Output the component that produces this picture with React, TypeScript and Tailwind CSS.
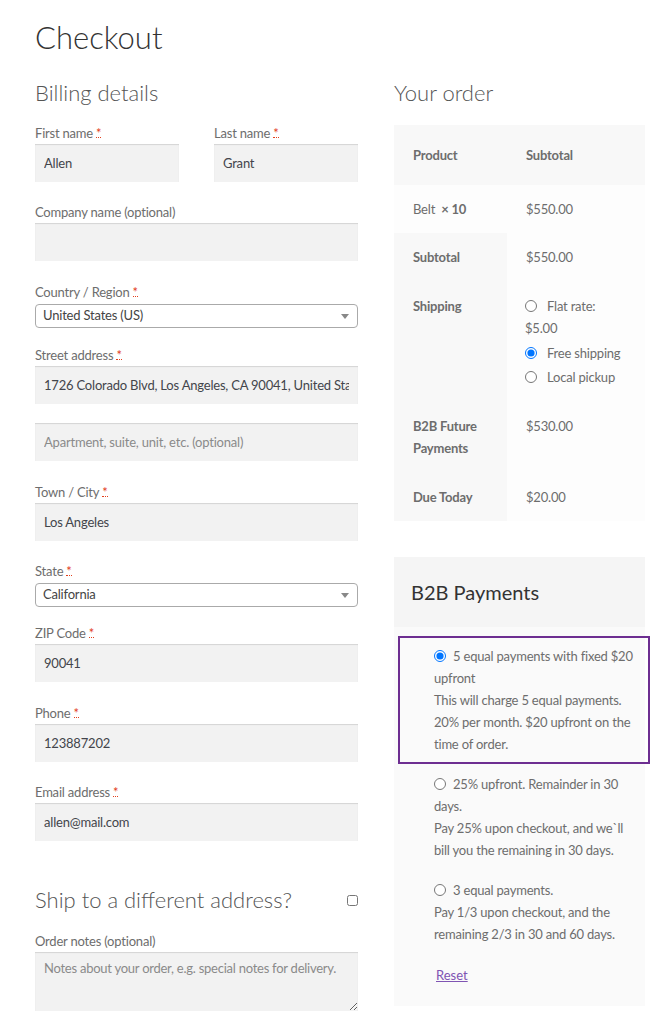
import React from 'react';

const font = { fontFamily: 'Lato, "Open Sans", Arial, sans-serif' };

const Req = () => (
  <abbr
    title="required"
    className="ml-[3px] text-[#e2401c] no-underline border-b border-dotted border-[#e2401c] leading-[8px] inline-block"
  >
    *
  </abbr>
);

const Label: React.FC<{ text: string; req?: boolean }> = ({ text, req }) => (
  <label className="block text-[13px] leading-[22px] tracking-[-0.2px] text-[#6d6d6d]">
    {text}
    {req && <Req />}
  </label>
);

const TextInput: React.FC<{ value?: string; placeholder?: string }> = ({ value, placeholder }) => (
  <input
    readOnly
    value={value ?? ''}
    placeholder={placeholder}
    className="block w-full h-[38px] bg-[#f2f2f2] px-[9px] text-[13px] tracking-[-0.2px] text-[#43454b] placeholder:text-[#8a8a8a] shadow-[inset_0_1px_1px_rgba(0,0,0,0.125)] outline-none"
  />
);

const Select: React.FC<{ value: string }> = ({ value }) => (
  <div className="mt-[1px] h-[24px] w-full border border-[#aaa] rounded-[4px] bg-white flex items-center justify-between pl-[7px] pr-[8px]">
    <span className="text-[13px] tracking-[-0.2px] text-[#444]">{value}</span>
    <span className="w-0 h-0 border-l-[4px] border-r-[4px] border-t-[5px] border-l-transparent border-r-transparent border-t-[#888]" />
  </div>
);

const Radio: React.FC<{ checked?: boolean; name: string; className?: string }> = ({ checked, name, className }) => (
  <input
    type="radio"
    name={name}
    defaultChecked={checked}
    className={`m-0 w-[12px] h-[12px] align-[-1px] ${className ?? ''}`}
  />
);

const PayOption: React.FC<{
  selected?: boolean;
  title: string;
  desc: string;
}> = ({ selected, title, desc }) => (
  <div
    className={`ml-[4px] w-[252px] border-2 py-[7px] pl-[34px] pr-[8px] text-[13px] leading-[22px] tracking-[-0.2px] text-[#6d6d6d] ${
      selected ? 'border-[#6d2e91]' : 'border-transparent'
    }`}
  >
    <div>
      <Radio name="b2b" checked={selected} className="mr-[7px]" />
      {title}
    </div>
    <div>{desc}</div>
  </div>
);

export default function App() {
  return (
    <div className="min-h-screen bg-white pl-[35px] pt-[17px] text-[#6d6d6d]" style={font}>
      <h1 className="text-[31px] leading-[40px] font-light text-[#333]">Checkout</h1>

      <div className="mt-[21px] flex gap-[36px]">
        {/* billing */}
        <div className="w-[323px]">
          <h3 className="text-[22px] leading-[30px] font-light text-[#555]">Billing details</h3>

          <div className="mt-[14px] flex gap-[35px]">
            <div className="w-[144px]">
              <Label text="First name" req />
              <TextInput value="Allen" />
            </div>
            <div className="w-[144px]">
              <Label text="Last name" req />
              <TextInput value="Grant" />
            </div>
          </div>

          <div className="mt-[19px]">
            <Label text="Company name (optional)" />
            <TextInput />
          </div>

          <div className="mt-[20px]">
            <Label text="Country / Region" req />
            <Select value="United States (US)" />
          </div>

          <div className="mt-[16px]">
            <Label text="Street address" req />
            <TextInput value="1726 Colorado Blvd, Los Angeles, CA 90041, United States" />
            <div className="mt-[19px]">
              <TextInput placeholder="Apartment, suite, unit, etc. (optional)" />
            </div>
          </div>

          <div className="mt-[20px]">
            <Label text="Town / City" req />
            <TextInput value="Los Angeles" />
          </div>

          <div className="mt-[19px]">
            <Label text="State" req />
            <Select value="California" />
          </div>

          <div className="mt-[15px]">
            <Label text="ZIP Code" req />
            <TextInput value="90041" />
          </div>

          <div className="mt-[20px]">
            <Label text="Phone" req />
            <TextInput value="123887202" />
          </div>

          <div className="mt-[19px]">
            <Label text="Email address" req />
            <TextInput value="allen@mail.com" />
          </div>

          <div className="mt-[44px] flex items-center justify-between">
            <h3 className="text-[22px] leading-[30px] font-light text-[#555]">Ship to a different address?</h3>
            <input type="checkbox" className="m-0 w-[11px] h-[11px]" />
          </div>

          <div className="mt-[15px]">
            <Label text="Order notes (optional)" />
            <textarea
              readOnly
              placeholder="Notes about your order, e.g. special notes for delivery."
              className="block w-full h-[59px] bg-[#f2f2f2] pl-[9px] pr-[4px] py-[7px] text-[13px] leading-[18px] tracking-[-0.25px] text-[#43454b] placeholder:text-[#8a8a8a] shadow-[inset_0_1px_1px_rgba(0,0,0,0.125)] outline-none"
            />
          </div>
        </div>

        {/* order */}
        <div className="w-[251px]">
          <h3 className="text-[22px] leading-[30px] font-light text-[#555]">Your order</h3>

          <table className="mt-[17px] w-full border-collapse text-[13px] leading-[22px] tracking-[-0.2px] text-left">
            <thead>
              <tr className="bg-[#f8f8f8] h-[60px]">
                <th className="w-[113px] px-[19px] font-bold text-[#6d6d6d]">Product</th>
                <th className="px-[19px] font-bold text-[#6d6d6d]">Subtotal</th>
              </tr>
            </thead>
            <tbody>
              <tr className="bg-[#fdfdfd] h-[48px]">
                <td className="px-[19px]">
                  Belt <strong className="ml-[3px] font-bold">× 10</strong>
                </td>
                <td className="px-[19px]">$550.00</td>
              </tr>
            </tbody>
            <tfoot>
              <tr className="h-[49px]">
                <th className="bg-[#f8f8f8] px-[19px] pt-[13px] align-top font-bold">Subtotal</th>
                <td className="bg-[#fdfdfd] px-[19px] pt-[13px] align-top">$550.00</td>
              </tr>
              <tr className="h-[118px]">
                <th className="bg-[#f8f8f8] px-[19px] pt-[13px] align-top font-bold">Shipping</th>
                <td className="bg-[#fdfdfd] pl-[18px] pr-[19px] pt-[13px] align-top">
                  <div>
                    <Radio name="ship" className="mr-[10px]" />
                    Flat rate: $5.00
                  </div>
                  <div className="mt-[3px]">
                    <Radio name="ship" checked className="mr-[10px]" />
                    Free shipping
                  </div>
                  <div className="mt-[2px]">
                    <Radio name="ship" className="mr-[10px]" />
                    Local pickup
                  </div>
                </td>
              </tr>
              <tr className="h-[70px]">
                <th className="bg-[#f8f8f8] px-[19px] pt-[15px] align-top font-bold">B2B Future Payments</th>
                <td className="bg-[#fdfdfd] px-[19px] pt-[15px] align-top">$530.00</td>
              </tr>
              <tr className="h-[51px]">
                <th className="bg-[#f8f8f8] px-[19px] pt-[16px] align-top font-bold">Due Today</th>
                <td className="bg-[#fdfdfd] px-[19px] pt-[16px] align-top">$20.00</td>
              </tr>
            </tfoot>
          </table>

          <div className="mt-[36px]">
            <div className="h-[70px] bg-[#f5f5f5] pl-[17px] flex items-center">
              <h2 className="text-[20px] text-[#333]">B2B Payments</h2>
            </div>
            <div className="bg-[#fafafa] pt-[9px] pb-[20px]">
              <PayOption
                selected
                title="5 equal payments with fixed $20 upfront"
                desc="This will charge 5 equal payments. 20% per month. $20 upfront on the time of order."
              />
              <PayOption
                title="25% upfront. Remainder in 30 days."
                desc="Pay 25% upon checkout, and we`ll bill you the remaining in 30 days."
              />
              <PayOption
                title="3 equal payments."
                desc="Pay 1/3 upon checkout, and the remaining 2/3 in 30 and 60 days."
              />
              <a href="#" className="mt-[10px] ml-[42px] inline-block text-[13px] leading-[22px] text-[#7f54b3] underline">
                Reset
              </a>
            </div>
          </div>
        </div>
      </div>
    </div>
  );
}
